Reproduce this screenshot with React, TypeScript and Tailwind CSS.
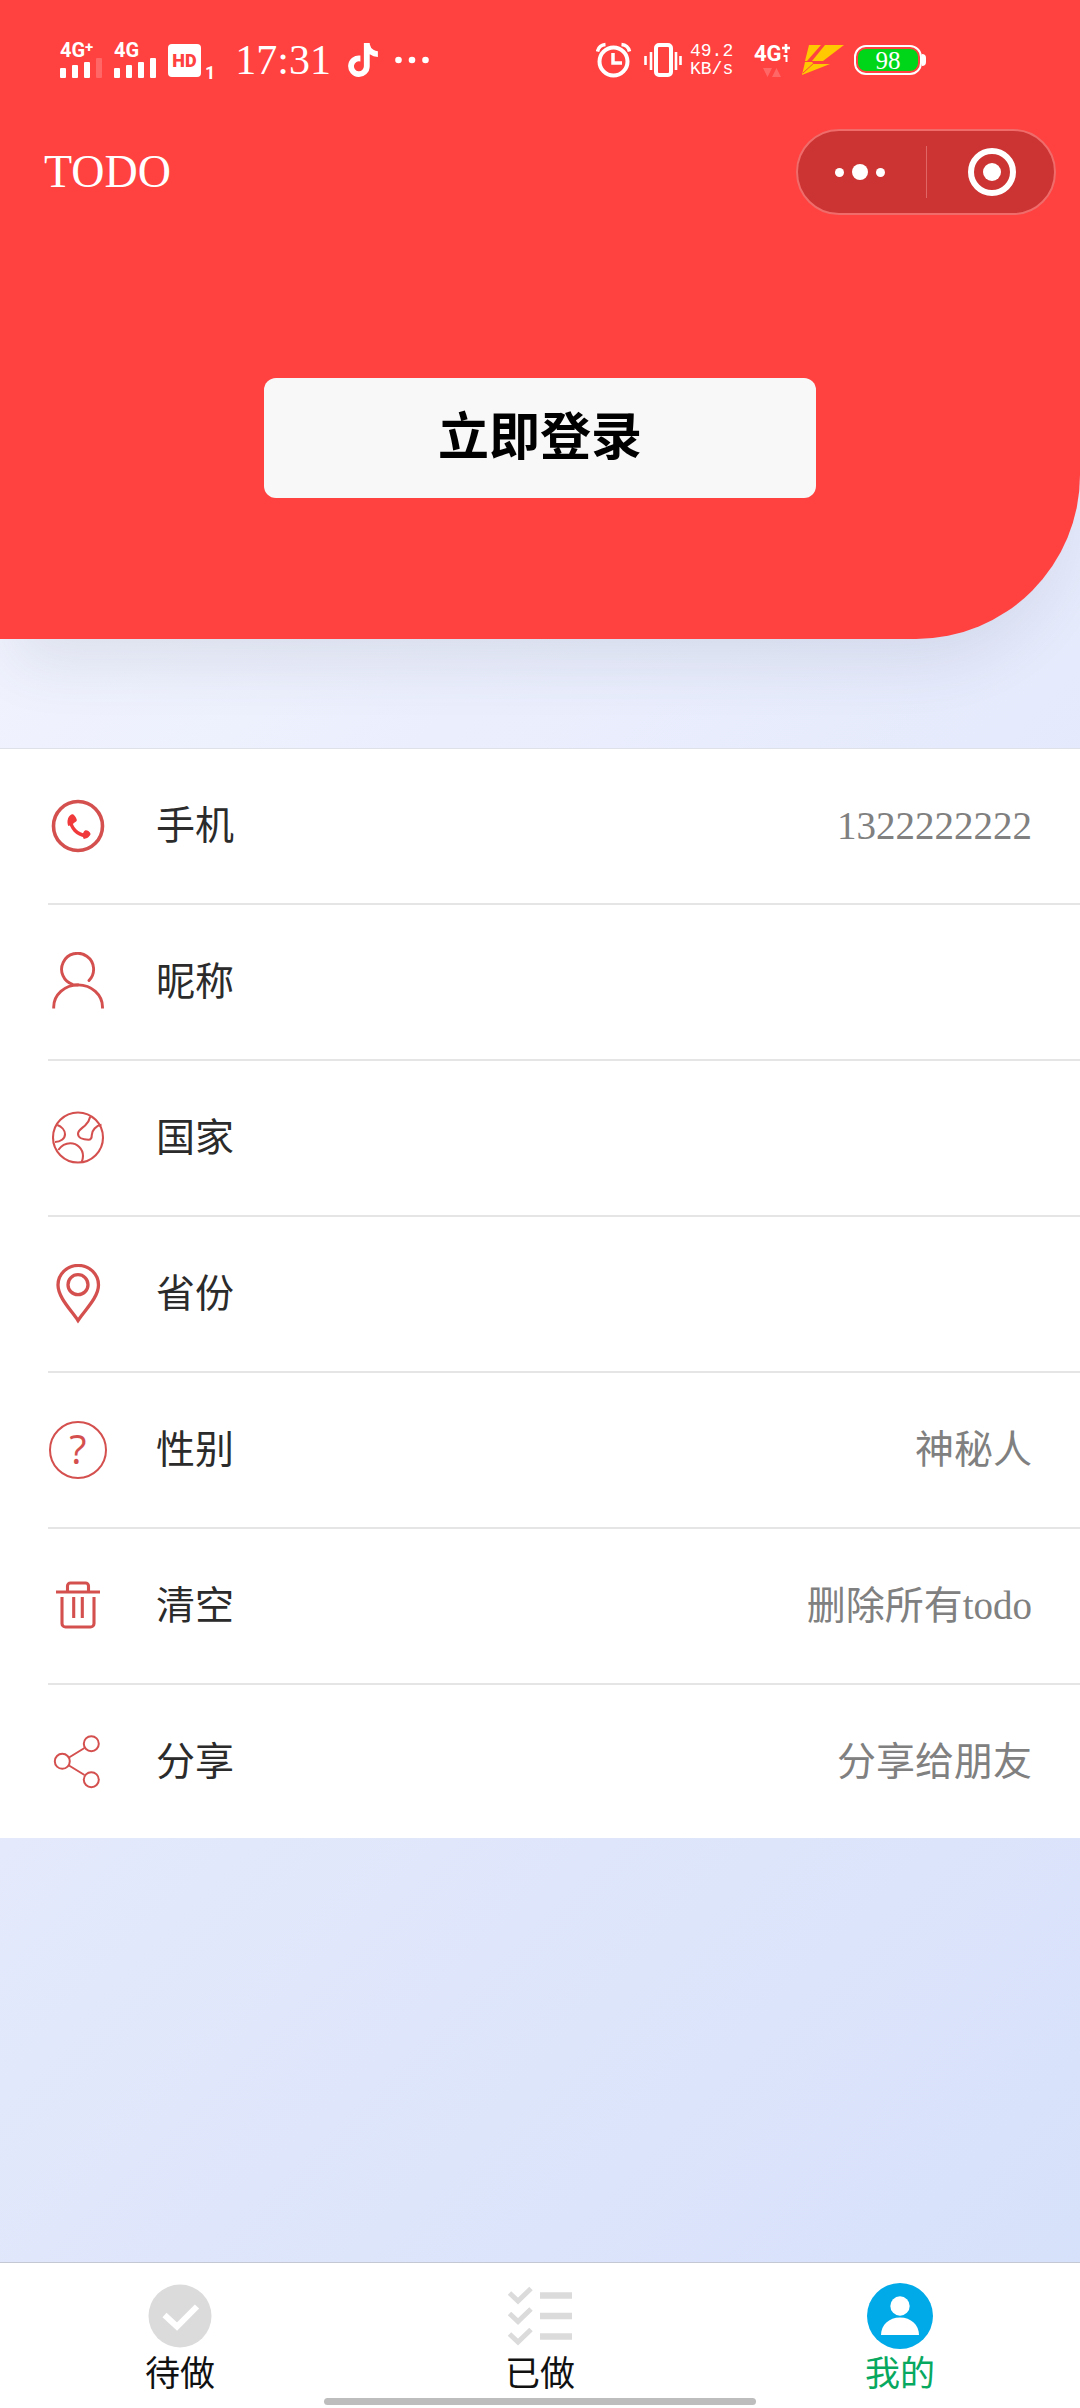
import React from 'react';
import { FaTiktok } from 'react-icons/fa6';

interface ProfileItem {
  key: string;
  label: string;
  value?: string;
  icon: React.ReactNode;
}

interface TabItem {
  key: string;
  label: string;
  icon: React.ReactNode;
  active?: boolean;
}

interface RowIconProps {
  strokeWidth: number;
  children: React.ReactNode;
}

const RowIcon: React.FC<RowIconProps> = ({ strokeWidth, children }) => (
  <svg
    viewBox="0 0 60 60"
    className="w-[60px] h-[60px] shrink-0 text-[#d4504f]"
    fill="none"
    stroke="currentColor"
    strokeWidth={strokeWidth}
    aria-hidden="true"
  >
    {children}
  </svg>
);

const profileItems: ProfileItem[] = [
  {
    key: 'phone',
    label: '手机',
    value: '1322222222',
    icon: (
      <RowIcon strokeWidth={3.6}>
        <circle cx="30" cy="30" r="24.5" />
        <path d="M22.500 24.500C23 32 29 38.500 37.500 39.500" stroke="#f0393b" strokeWidth="3.500" />
        <path
          d="M20 22.500c1-2.600 3.400-4.600 4.800-4.200 1.600.5 4.400 4.600 4 6.300-.4 1.600-3 1.800-4.300 3.900l-4.200 1.500c-1-2.500-1.100-5-.3-7.500zM41.800 39.600c-1.500 2.200-3.500 3.300-6 3.300l-1.900-4.200c1.500-1 1.700-4.100 3.700-4.400 1.700-.2 4.600 1.700 4.900 3.400.1.600-.2 1.300-.7 1.900z"
          fill="#f0393b"
          stroke="none"
        />
      </RowIcon>
    ),
  },
  {
    key: 'nickname',
    label: '昵称',
    icon: (
      <RowIcon strokeWidth={2.9}>
        <path d="M41 28.500A16 16 0 1 0 25 32.600Q27.500 33 30 33" strokeLinecap="round" />
        <path d="M5.700 56.500V55A24.300 22 0 0 1 54.500 55v1.500" />
      </RowIcon>
    ),
  },
  {
    key: 'country',
    label: '国家',
    icon: (
      <RowIcon strokeWidth={2.1}>
        <circle cx="30" cy="29.500" r="25" />
        <path d="M9.300 17c4 1.500 7.700 5 7.700 9.200 0 4.500-4.500 7.800-10 7.800" />
        <path d="M10.300 42c3.200-4.500 7.200-6.700 12-6.700 7 0 12.700 5.500 12.700 12.700 0 2.200-.5 4-1.300 6" />
        <path d="M42.300 8.500c-.8 3.500-2.700 6.500-5 8.800-3.300 3-7.300 5-7.300 8.500 0 3.700 4.500 5.900 10.500 5.900 2.700 0 3.300-2.200 3.300-4.700 0-4.500 4.200-9.500 9.700-10.300" />
      </RowIcon>
    ),
  },
  {
    key: 'province',
    label: '省份',
    icon: (
      <RowIcon strokeWidth={3.3}>
        <path d="M30 56.500C23.500 46.500 10 33.500 10 21a20.200 19.500 0 0 1 40.500 0C50.500 33.500 36.500 46.500 30 56.500z" />
        <circle cx="30" cy="20.700" r="10" />
      </RowIcon>
    ),
  },
  {
    key: 'gender',
    label: '性别',
    value: '神秘人',
    icon: (
      <RowIcon strokeWidth={2}>
        <circle cx="30" cy="30" r="28" />
        <text
          x="30"
          y="44"
          textAnchor="middle"
          fill="currentColor"
          stroke="none"
          className="font-['Open_Sans','Noto_Sans',sans-serif] font-normal text-[40px]"
        >
          ?
        </text>
      </RowIcon>
    ),
  },
  {
    key: 'clear',
    label: '清空',
    value: '删除所有todo',
    icon: (
      <RowIcon strokeWidth={3.1}>
        <path d="M8 16h44M19.500 16v-6a3 3 0 0 1 3-3h15a3 3 0 0 1 3 3v6" />
        <path d="M14 21v26.500a3.500 3.500 0 0 0 3.500 3.500h25a3.500 3.500 0 0 0 3.500-3.500V21M25.700 21v21M34.300 21v21" />
      </RowIcon>
    ),
  },
  {
    key: 'share',
    label: '分享',
    value: '分享给朋友',
    icon: (
      <RowIcon strokeWidth={2}>
        <circle cx="43.300" cy="11.700" r="7.500" />
        <circle cx="14.300" cy="29.300" r="7.500" />
        <circle cx="43.300" cy="47.700" r="7.500" />
        <path d="M21 25.500L36.500 16M21 33.500L36.500 43" />
      </RowIcon>
    ),
  },
];

const tabs: TabItem[] = [
  {
    key: 'todo',
    label: '待做',
    icon: (
      <svg viewBox="0 0 66 66" className="w-[66px] h-[66px]" aria-hidden="true">
        <circle cx="33" cy="33" r="31.500" fill="#dbdbdb" />
        <path d="M17.500 32L30 43.500 50 23.500" fill="none" stroke="#fff" strokeWidth="6" />
      </svg>
    ),
  },
  {
    key: 'done',
    label: '已做',
    icon: (
      <svg viewBox="0 0 66 66" className="w-[66px] h-[66px]" fill="none" stroke="#dbdbdb" aria-hidden="true">
        <path d="M2.500 10l8.500 8L24 5.500M2.500 30.500l8.500 8L24 26M2.500 51l8.500 8L24 46.500" strokeWidth="5" />
        <path d="M33 12.500h32M33 33h32M33 53.500h32" strokeWidth="6.500" />
      </svg>
    ),
  },
  {
    key: 'mine',
    label: '我的',
    active: true,
    icon: (
      <svg viewBox="0 0 66 66" className="w-[66px] h-[66px]" aria-hidden="true">
        <circle cx="33" cy="33" r="33" fill="#00aae8" />
        <circle cx="33" cy="23" r="9.700" fill="#fff" />
        <path d="M14 52c0-10 8-17.500 19-17.500S52 42 52 52z" fill="#fff" />
      </svg>
    ),
  },
];

const SignalIcon: React.FC<{ label: string; plus?: boolean }> = ({ label, plus }) => (
  <div className="flex flex-col w-11 text-white">
    <div className="flex items-start h-4 font-['Roboto',sans-serif] font-bold text-[20px] leading-4">
      {label}
      {plus && <span className="text-[15px] leading-[10px]">+</span>}
    </div>
    <svg viewBox="0 0 44 20" className="w-11 h-5" fill="currentColor" aria-hidden="true">
      <rect x="0" y="10" width="6" height="10" rx="1" />
      <rect x="12" y="7" width="6" height="13" rx="1" />
      <rect x="24" y="4" width="6" height="16" rx="1" />
      <rect x="36" y="0" width="6" height="20" rx="1" opacity={plus ? 0.2 : 1} />
    </svg>
  </div>
);

const StatusBar: React.FC = () => (
  <div className="flex items-center justify-between h-[120px] pl-[60px] pr-[154px] text-white">
    <div className="flex items-center">
      <div className="flex items-center gap-2.5">
        <SignalIcon label="4G" plus />
        <SignalIcon label="4G" />
        <span className="flex items-center justify-center w-[33px] h-[33px] rounded-sm bg-white text-[#ff4140] font-['Roboto',sans-serif] font-black text-[18px]">
          HD
        </span>
      </div>
      <span className="self-end ml-1 mr-5 font-['Roboto',sans-serif] font-bold text-[18px] leading-4">1</span>
      <span className="font-['Liberation_Serif',serif] text-[42px] leading-[42px]">17:31</span>
      <FaTiktok className="ml-4 w-8 h-[34px]" aria-hidden="true" />
      <svg viewBox="0 0 34 8" className="ml-4 w-[34px] h-2" fill="currentColor" aria-hidden="true">
        <circle cx="3.500" cy="4" r="3.300" />
        <circle cx="17" cy="4" r="3.300" />
        <circle cx="30.500" cy="4" r="3.300" />
      </svg>
    </div>

    <div className="flex items-center">
      {/* Alarm */}
      <svg viewBox="0 0 36 36" className="w-9 h-9" fill="none" stroke="currentColor" aria-hidden="true">
        <circle cx="17.500" cy="19.500" r="14" strokeWidth="4" />
        <path d="M17 11v10h9" strokeWidth="3.500" />
        <path d="M1.500 9.500Q3 3 9.500 2.500M33.500 9.500Q32 3 25.500 2.500" strokeWidth="3.500" />
      </svg>
      {/* Vibrate */}
      <svg viewBox="0 0 38 34" className="ml-3 w-[38px] h-[34px]" fill="none" stroke="currentColor" aria-hidden="true">
        <rect x="12" y="2" width="15" height="30" rx="3" strokeWidth="4" />
        <path d="M7 9v18M32 9v18M1.500 13v9M36.500 13v9" strokeWidth="2.600" />
      </svg>
      <div className="ml-2 w-11 font-['Liberation_Mono',monospace] text-[18px] leading-[18px]">
        49.2
        <br />
        KB/s
      </div>
      <div className="flex flex-col items-center ml-5 w-9">
        <div className="flex h-5 w-full font-['Roboto',sans-serif] font-bold text-[22px] leading-5">
          4G
          <svg viewBox="0 0 8 18" className="w-2 h-[18px] shrink-0" fill="none" stroke="currentColor" aria-hidden="true">
            <path d="M0 4h8M4 0v9" strokeWidth="2.600" />
            <path d="M1.500 12H4.500v6" strokeWidth="2" />
          </svg>
        </div>
        <svg viewBox="0 0 18 9" className="mt-1 w-[18px] h-[9px]" fill="currentColor" opacity="0.2" aria-hidden="true">
          <path d="M0 0h9l-4.500 9zM9 9h9L13.500 0z" />
        </svg>
      </div>
      <svg viewBox="0 0 42 30" className="ml-3 w-[42px] h-[30px]" fill="#ffc800" aria-hidden="true">
        <path d="M7 0h12L5 16H3z" />
        <path d="M23 0h19L21 16H10z" />
        <path d="M3 17h7l2 2h16L0 30z" />
        <path d="M1 28L13 17" stroke="#ff4140" strokeWidth="1" />
      </svg>
      <div className="flex items-center ml-2.5">
        <div className="w-[68px] h-[30px] rounded-xl border-2 border-white p-[2px]">
          <div className="flex items-center justify-center h-full rounded-lg bg-[#00d619] font-['Liberation_Serif',serif] text-[25px] leading-none">
            98
          </div>
        </div>
        <div className="w-1 h-3 rounded-r-sm bg-white" />
      </div>
    </div>
  </div>
);

const App: React.FC = () => {
  return (
    <div className="relative flex flex-col min-h-screen bg-[linear-gradient(135deg,#f7f8ff_0%,#e5eafc_50%,#d5e0fa_100%)] font-['Liberation_Serif','Noto_Sans_CJK_SC',serif]">
      <header className="bg-[#ff4140] rounded-br-[164px] pb-[141px] shadow-[0_40px_60px_-16px_rgba(60,80,100,0.11)]">
        <StatusBar />

        <div className="flex items-center justify-between h-[104px] pl-11 pr-6">
          <h1 className="text-[46px] leading-none text-white">TODO</h1>
          <div className="flex items-center w-[260px] h-[86px] rounded-full border-2 border-[#ef6c6b] bg-[#cc3433]">
            <button type="button" aria-label="更多" className="flex flex-1 items-center justify-center gap-2 pr-1">
              <span className="w-[9px] h-[9px] rounded-full bg-white" />
              <span className="w-4 h-4 rounded-full bg-white" />
              <span className="w-[9px] h-[9px] rounded-full bg-white" />
            </button>
            <span className="w-px h-[52px] bg-[#e06665]" />
            <button type="button" aria-label="关闭" className="flex flex-1 items-center justify-center pl-1">
              <span className="flex items-center justify-center w-12 h-12 rounded-full border-[6px] border-white">
                <span className="w-[18px] h-[18px] rounded-full bg-white" />
              </span>
            </button>
          </div>
        </div>

        <div className="flex justify-center pt-[154px]">
          <button
            type="button"
            className="w-[552px] max-w-full h-[120px] rounded-xl bg-[#f8f8f8] text-[51px] font-bold text-black"
          >
            立即登录
          </button>
        </div>
      </header>

      <ul className="mt-[109px] bg-white border-t border-[#dfe1e8]">
        {profileItems.map((item, index) => (
          <li key={item.key} className="pl-12">
            <button
              type="button"
              className={`flex items-center w-full pr-12 text-left text-[39px] leading-[60px] ${
                index < profileItems.length - 1 ? 'h-[156px] border-b-2 border-[#e5e5e5]' : 'h-[153px]'
              }`}
            >
              {item.icon}
              <span className="ml-12 flex-1 text-[#2b2b2b]">{item.label}</span>
              <span className="text-[#808080]">{item.value}</span>
            </button>
          </li>
        ))}
      </ul>

      <nav className="flex mt-auto pt-5 pb-[7px] bg-white border-t border-[#c4c7d4]">
        {tabs.map(tab => (
          <a
            key={tab.key}
            href={`#${tab.key}`}
            className={`flex flex-1 flex-col items-center text-[35px] leading-[52px] ${
              tab.active ? 'text-[#07a860]' : 'text-[#111111]'
            }`}
          >
            {tab.icon}
            {tab.label}
          </a>
        ))}
      </nav>

      {/* Home indicator */}
      <div className="absolute bottom-[3px] left-1/2 -translate-x-1/2 w-[432px] h-[7px] rounded-full bg-[#bdbdbd]" />
    </div>
  );
};

export default App;
